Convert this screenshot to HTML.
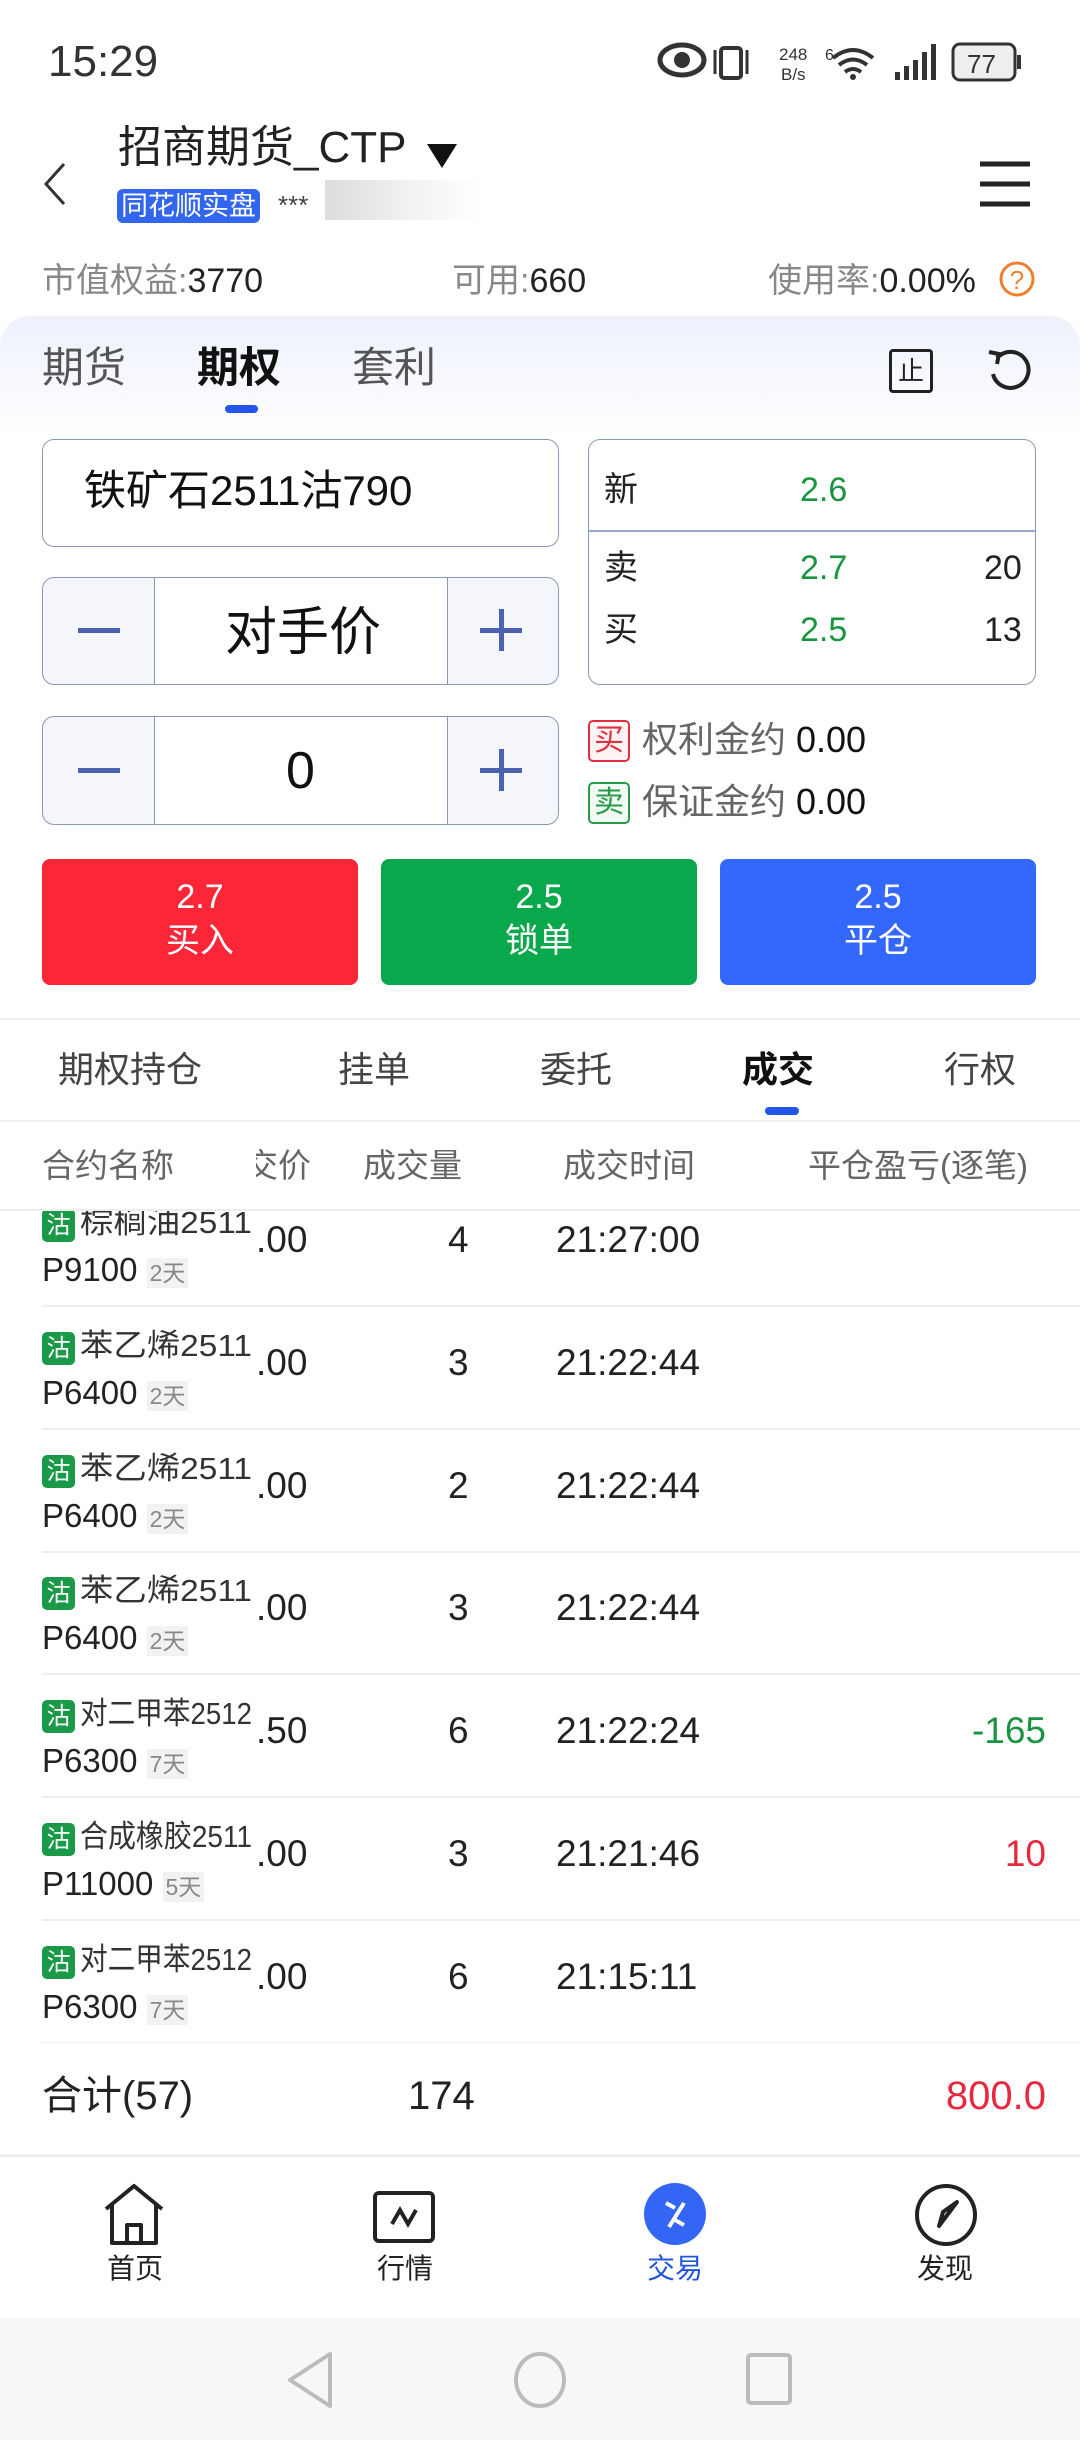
<!DOCTYPE html>
<html><head><meta charset="utf-8">
<style>
*{margin:0;padding:0;box-sizing:border-box}
body{width:1080px;height:2440px;position:relative;overflow:hidden;background:#fff;font-family:"Liberation Sans","Noto Sans CJK SC",sans-serif;color:#222}
.t{position:absolute;white-space:nowrap;line-height:1.2}
.box{position:absolute;border:1.5px solid #8a98b8;border-radius:12px}
.g{color:#1a9440}
.r{color:#e8283c}
</style></head><body>
<!-- status -->
<div class="t" style="left:48px;top:36px;font-size:44px;color:#333">15:29</div>
<svg style="position:absolute;left:655px;top:40px" width="380" height="44" viewBox="0 0 380 44">
<ellipse cx="27" cy="20" rx="22" ry="15" fill="none" stroke="#333" stroke-width="5"/><circle cx="27" cy="20" r="8" fill="#333"/>
<rect x="66" y="8" width="20" height="30" rx="3" fill="none" stroke="#333" stroke-width="4"/>
<path d="M60 10v24M92 10v24" stroke="#333" stroke-width="3"/>
<text x="124" y="20" font-size="17" fill="#333" font-family="Liberation Sans">248</text><text x="126" y="40" font-size="17" fill="#333" font-family="Liberation Sans">B/s</text>
<text x="170" y="20" font-size="16" fill="#333">6</text>
<path d="M178 18q20-16 40 0M184 25q14-11 28 0M190 32q8-6 16 0" stroke="#333" stroke-width="4" fill="none"/><circle cx="198" cy="37" r="3" fill="#333"/>
<rect x="240" y="32" width="5" height="8" fill="#333"/><rect x="249" y="26" width="5" height="14" fill="#333"/><rect x="258" y="20" width="5" height="20" fill="#333"/><rect x="267" y="12" width="5" height="28" fill="#333"/><rect x="276" y="4" width="5" height="36" fill="#333"/>
<rect x="298" y="4" width="62" height="36" rx="7" fill="#eee" stroke="#333" stroke-width="3"/><rect x="362" y="15" width="4" height="14" fill="#333"/>
<text x="312" y="33" font-size="26" fill="#333" font-family="Liberation Sans">77</text>
</svg>
<!-- header -->
<svg style="position:absolute;left:40px;top:160px" width="30" height="50"><path d="M24 4L6 24l18 20" stroke="#333" stroke-width="3" fill="none"/></svg>
<div class="t" style="left:118px;top:122px;font-size:44px;color:#222">招商期货_CTP</div>
<svg style="position:absolute;left:425px;top:142px" width="34" height="28"><path d="M2 2h30L17 26z" fill="#111"/></svg>
<div class="t" style="left:117px;top:189px;font-size:27px;line-height:34px;background:#3366ee;color:#fff;border-radius:6px;padding:0 4px">同花顺实盘</div>
<div class="t" style="left:278px;top:190px;font-size:26px;color:#444">***</div>
<div style="position:absolute;left:325px;top:180px;width:160px;height:40px;background:linear-gradient(90deg,#ddd,#f4f4f4 60%,#fff)"></div>
<svg style="position:absolute;left:978px;top:160px" width="54" height="48"><path d="M2 4h50M2 24h50M2 44h50" stroke="#222" stroke-width="5"/></svg>
<div class="t" style="left:42px;top:261px;font-size:34px;color:#888">市值权益:<span style="color:#222">3770</span></div>
<div class="t" style="left:452px;top:261px;font-size:34px;color:#888">可用:<span style="color:#222">660</span></div>
<div class="t" style="left:768px;top:261px;font-size:34px;color:#888">使用率:<span style="color:#222">0.00%</span></div>
<svg style="position:absolute;left:998px;top:260px" width="38" height="38"><circle cx="19" cy="19" r="16" fill="none" stroke="#f08030" stroke-width="3"/><text x="19" y="29" text-anchor="middle" font-size="26" fill="#f08030" font-family="Liberation Sans">?</text></svg>
<!-- panel -->
<div style="position:absolute;left:0;top:316px;width:1080px;height:120px;border-radius:30px 30px 0 0;background:linear-gradient(#eef1fc,#fff)"></div>
<div class="t" style="left:42px;top:343px;font-size:42px;color:#555">期货</div>
<div class="t" style="left:197px;top:343px;font-size:42px;color:#111;font-weight:bold">期权</div>
<div class="t" style="left:352px;top:343px;font-size:42px;color:#555">套利</div>
<div style="position:absolute;left:225px;top:405px;width:33px;height:8px;border-radius:4px;background:#2255e8"></div>
<div style="position:absolute;left:889px;top:349px;width:44px;height:44px;border:3px solid #222;border-radius:4px;font-size:26px;text-align:center;line-height:38px">止</div>
<svg style="position:absolute;left:985px;top:346px" width="50" height="50"><path d="M12 12A18 18 0 1 1 8 28" stroke="#222" stroke-width="4" fill="none"/><path d="M4 6l10 2-2 10" stroke="#222" stroke-width="4" fill="none"/></svg>
<!-- contract -->
<div class="box" style="left:42px;top:439px;width:517px;height:108px"></div>
<div class="t" style="left:84px;top:466px;font-size:42px;color:#111">铁矿石2511沽790</div>
<!-- quote -->
<div class="box" style="left:588px;top:439px;width:448px;height:246px"></div>
<div style="position:absolute;left:589px;top:530px;width:446px;height:2px;background:#9aa8c8"></div>
<div class="t" style="left:604px;top:470px;font-size:34px">新</div>
<div class="t g" style="left:800px;top:470px;font-size:34px">2.6</div>
<div class="t" style="left:604px;top:548px;font-size:34px">卖</div>
<div class="t g" style="left:800px;top:548px;font-size:34px">2.7</div>
<div class="t" style="left:984px;top:548px;font-size:34px">20</div>
<div class="t" style="left:604px;top:610px;font-size:34px">买</div>
<div class="t g" style="left:800px;top:610px;font-size:34px">2.5</div>
<div class="t" style="left:984px;top:610px;font-size:34px">13</div>
<!-- steppers -->
<div class="box" style="left:42px;top:577px;width:517px;height:108px;background:#f4f6fc;overflow:hidden"><div style="position:absolute;left:111px;top:0;width:294px;height:106px;background:#fff;border-left:1.5px solid #8a98b8;border-right:1.5px solid #8a98b8"></div></div>
<div style="position:absolute;left:78px;top:628px;width:42px;height:5px;background:#4a62b0"></div>
<div style="position:absolute;left:480px;top:628px;width:42px;height:5px;background:#4a62b0"></div><div style="position:absolute;left:499px;top:609px;width:5px;height:42px;background:#4a62b0"></div>
<div class="t" style="left:218px;top:602px;font-size:52px;color:#111;width:170px;text-align:center">对手价</div>
<div class="box" style="left:42px;top:716px;width:517px;height:109px;background:#f4f6fc;overflow:hidden"><div style="position:absolute;left:111px;top:0;width:294px;height:107px;background:#fff;border-left:1.5px solid #8a98b8;border-right:1.5px solid #8a98b8"></div></div>
<div style="position:absolute;left:78px;top:768px;width:42px;height:5px;background:#4a62b0"></div>
<div style="position:absolute;left:480px;top:768px;width:42px;height:5px;background:#4a62b0"></div><div style="position:absolute;left:499px;top:749px;width:5px;height:42px;background:#4a62b0"></div>
<div class="t" style="left:286px;top:740px;font-size:52px;color:#111">0</div>
<!-- margins -->
<div class="t" style="left:588px;top:720px;font-size:30px;line-height:38px;width:42px;text-align:center;border:2px solid #e03040;border-radius:5px;color:#e03040;background:#fff3f3">买</div>
<div class="t" style="left:642px;top:718px;font-size:36px;color:#666">权利金约 <span style="color:#111">0.00</span></div>
<div class="t" style="left:588px;top:782px;font-size:30px;line-height:38px;width:42px;text-align:center;border:2px solid #2a9a4a;border-radius:5px;color:#2a9a4a;background:#f0fbf3">卖</div>
<div class="t" style="left:642px;top:780px;font-size:36px;color:#666">保证金约 <span style="color:#111">0.00</span></div>
<!-- buttons -->
<div style="position:absolute;left:42px;top:859px;width:316px;height:126px;background:#fb2638;border-radius:8px;color:#fff;text-align:center;font-size:34px;line-height:44px;padding-top:16px">2.7<br>买入</div>
<div style="position:absolute;left:381px;top:859px;width:316px;height:126px;background:#0aa84c;border-radius:8px;color:#fff;text-align:center;font-size:34px;line-height:44px;padding-top:16px">2.5<br>锁单</div>
<div style="position:absolute;left:720px;top:859px;width:316px;height:126px;background:#3467fd;border-radius:8px;color:#fff;text-align:center;font-size:34px;line-height:44px;padding-top:16px">2.5<br>平仓</div>
<div style="position:absolute;left:0;top:1018px;width:1080px;height:2px;background:#eee"></div>
<!-- tabs2 -->
<div class="t" style="left:58px;top:1048px;font-size:36px;color:#444">期权持仓</div>
<div class="t" style="left:338px;top:1048px;font-size:36px;color:#444">挂单</div>
<div class="t" style="left:540px;top:1048px;font-size:36px;color:#444">委托</div>
<div class="t" style="left:742px;top:1048px;font-size:36px;color:#111;font-weight:bold">成交</div>
<div class="t" style="left:944px;top:1048px;font-size:36px;color:#444">行权</div>
<div style="position:absolute;left:765px;top:1107px;width:34px;height:8px;border-radius:4px;background:#2255e8"></div>
<div style="position:absolute;left:0;top:1120px;width:1080px;height:2px;background:#eee"></div>
<!-- table header -->
<div class="t" style="left:42px;top:1146px;font-size:33px;color:#666">合约名称</div>
<div style="position:absolute;left:256px;top:1146px;width:55px;height:44px;overflow:hidden"><div class="t" style="right:0;top:0;font-size:33px;color:#666">交价</div></div>
<div class="t" style="left:363px;top:1146px;font-size:33px;color:#666">成交量</div>
<div class="t" style="left:563px;top:1146px;font-size:33px;color:#666">成交时间</div>
<div class="t" style="left:808px;top:1146px;font-size:33px;color:#666">平仓盈亏(逐笔)</div>
<div style="position:absolute;left:0;top:1209px;width:1080px;height:2px;background:#eee"></div>
<div style="position:absolute;left:0;top:1211px;width:1080px;height:832px;overflow:hidden">
<div id="rows"></div>
</div>
<script>
var d=[["棕榈油2511","P9100","2天",".00","4","21:27:00","",""],
["苯乙烯2511","P6400","2天",".00","3","21:22:44","",""],
["苯乙烯2511","P6400","2天",".00","2","21:22:44","",""],
["苯乙烯2511","P6400","2天",".00","3","21:22:44","",""],
["对二甲苯2512","P6300","7天",".50","6","21:22:24","-165","g"],
["合成橡胶2511","P11000","5天",".00","3","21:21:46","10","r"],
["对二甲苯2512","P6300","7天",".00","6","21:15:11","",""]];
var h="";
for(var i=0;i<7;i++){var r=d[i],b=1225+122.8*i-1211;
h+='<div class="t" style="left:42px;top:'+(b-16)+'px;width:33px;height:33px;line-height:33px;background:#1a9a48;color:#fff;font-size:24px;text-align:center;border-radius:5px">沽</div>';
h+='<div class="t nm" style="left:80px;top:'+(b-21)+'px;font-size:31px;color:#333;transform-origin:0 50%">'+r[0]+'</div>';
h+='<div class="t" style="left:42px;top:'+(b+25)+'px;font-size:33px;color:#222">'+r[1]+' <span style="font-size:23px;color:#888;background:#f2f2f2;padding:2px 3px">'+r[2]+'</span></div>';
h+='<div class="t" style="left:256px;top:'+(b-7)+'px;font-size:37px;color:#222">'+r[3]+'</div>';
h+='<div class="t" style="left:448px;top:'+(b-7)+'px;font-size:37px;color:#222">'+r[4]+'</div>';
h+='<div class="t" style="left:556px;top:'+(b-7)+'px;font-size:37px;color:#222">'+r[5]+'</div>';
if(r[6])h+='<div class="t '+r[7]+'" style="right:34px;top:'+(b-7)+'px;font-size:37px">'+r[6]+'</div>';
h+='<div style="position:absolute;left:42px;top:'+(b+80)+'px;width:1038px;height:2px;background:#eee"></div>';}
document.getElementById("rows").innerHTML=h;
var ns=document.querySelectorAll(".nm");
for(var k=0;k<ns.length;k++){var w=ns[k].getBoundingClientRect().width;ns[k].style.transform="scaleX("+(172/w)+")";}
</script>
<!-- total -->
<div class="t" style="left:42px;top:2072px;font-size:40px;color:#222">合计(57)</div>
<div class="t" style="left:408px;top:2072px;font-size:40px;color:#222">174</div>
<div class="t r" style="right:34px;top:2072px;font-size:40px">800.0</div>
<div style="position:absolute;left:0;top:2154px;width:1080px;height:3px;background:#eee"></div>
<!-- nav -->
<svg style="position:absolute;left:102px;top:2183px" width="64" height="64"><path d="M4 26L32 3l28 23M10 21v39h44V21M25 60V42h14v18" stroke="#222" stroke-width="4" fill="none" stroke-linejoin="round"/></svg>
<div class="t" style="left:107px;top:2252px;font-size:28px;color:#222">首页</div>
<svg style="position:absolute;left:372px;top:2190px" width="64" height="54"><rect x="3" y="3" width="58" height="48" rx="4" fill="none" stroke="#222" stroke-width="4"/><path d="M20 34l8-14 8 14 8-14" stroke="#222" stroke-width="4" fill="none"/></svg>
<div class="t" style="left:377px;top:2252px;font-size:28px;color:#222">行情</div>
<svg style="position:absolute;left:644px;top:2183px" width="62" height="62"><circle cx="31" cy="31" r="31" fill="#3366f5"/><path d="M22 20l9 5M40 20L25 44M31 37l9 5" stroke="#fff" stroke-width="4" fill="none"/></svg>
<div class="t" style="left:647px;top:2252px;font-size:28px;color:#2255dd">交易</div>
<svg style="position:absolute;left:914px;top:2183px" width="64" height="64"><circle cx="32" cy="32" r="29" fill="none" stroke="#222" stroke-width="4"/><path d="M43 19L25 43l4-14z" fill="none" stroke="#222" stroke-width="4" stroke-linejoin="round"/></svg>
<div class="t" style="left:917px;top:2252px;font-size:28px;color:#222">发现</div>
<div style="position:absolute;left:0;top:2318px;width:1080px;height:122px;background:#f7f7f7"></div>
<svg style="position:absolute;left:280px;top:2350px" width="520" height="60"><path d="M50 4L10 30l40 26z" fill="none" stroke="#bbb" stroke-width="4" stroke-linejoin="round"/><ellipse cx="260" cy="30" rx="24" ry="26" fill="none" stroke="#bbb" stroke-width="4"/><rect x="468" y="5" width="42" height="48" rx="3" fill="none" stroke="#bbb" stroke-width="4"/></svg>
</body></html>
